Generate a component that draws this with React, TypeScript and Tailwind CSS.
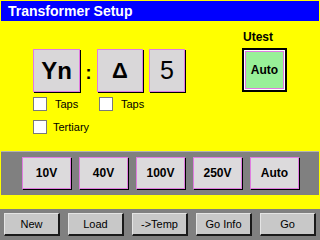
import React from 'react';

const FONT = { fontFamily: '"Liberation Sans", Arial, sans-serif' };

function BigKey({ label, width, className }: { label: string; width: string; className: string }) {
    return (
        <div
            className={`${width} h-[43px] flex items-center justify-center bg-[#d9d7d9] border border-[#e07ce0] shadow-[1px_1px_0_#000] text-black ${className}`}
        >
            {label}
        </div>
    );
}

function Check({ label, gap }: { label: string; gap: string }) {
    return (
        <div className={`flex items-center ${gap}`}>
            <div className="w-[14px] h-[14px] bg-white border border-[#7a7a7a]"></div>
            <span className="text-[11px] leading-[14px] text-black">{label}</span>
        </div>
    );
}

const RANGES = ['10V', '40V', '100V', '250V', 'Auto'];
const ACTIONS = ['New', 'Load', '->Temp', 'Go Info', 'Go'];

export default function App() {
    return (
        <div className="w-[320px] h-[240px] bg-[#ffff00] flex flex-col overflow-hidden" style={FONT}>
            {/* Title */}
            <div className="mx-[1px] mt-[1px] h-[20px] bg-[#0000ff] text-white font-bold text-[14px] leading-[16px] pl-[7px] flex items-center">
                Transformer Setup
            </div>

            {/* Main area */}
            <div className="h-[130px] flex">
                <div className="ml-[33px] mt-[28px] w-[153px] flex flex-col">
                    <div className="flex items-start">
                        <BigKey label="Yn" width="w-[47px]" className="text-[24px] font-bold" />
                        <div className="w-[17px] h-[43px] flex items-end justify-center pb-[10px] text-[18px] leading-[18px] font-bold text-black">:</div>
                        <BigKey label="Δ" width="w-[46px]" className="text-[22px] font-bold" />
                        <BigKey label="5" width="w-[36px]" className="ml-[6px] text-[25px]" />
                    </div>
                    <div className="flex mt-[5px]">
                        <div className="w-[66px]">
                            <Check label="Taps" gap="gap-[8px]" />
                        </div>
                        <Check label="Taps" gap="gap-[8px]" />
                    </div>
                    <div className="mt-[9px]">
                        <Check label="Tertiary" gap="gap-[6px]" />
                    </div>
                </div>

                <div className="ml-[56px] pt-[9px] flex flex-col">
                    <div className="ml-[1px] text-[12px] leading-[14px] font-bold text-black">Utest</div>
                    <div className="mt-[4px] w-[45px] h-[44px] border-2 border-black bg-white p-[1px]">
                        <div className="w-full h-full bg-[#98f098] border border-[#e07ce0] flex items-center justify-center text-[12px] font-bold text-black">
                            Auto
                        </div>
                    </div>
                </div>
            </div>

            {/* Range bar */}
            <div className="mx-[1px] h-[44px] bg-[#808080] border-t border-[#b4b4b4] pl-[21px] pt-[5px] flex gap-[8px]">
                {RANGES.map((r) => (
                    <div
                        key={r}
                        className="w-[49px] h-[32px] bg-[#dcdadc] border border-[#e07ce0] shadow-[1px_1px_0_#000] flex items-center justify-center text-[12px] font-bold text-black"
                    >
                        {r}
                    </div>
                ))}
            </div>

            <div className="h-[14px]"></div>

            {/* Footer */}
            <div className="h-[31px] bg-[#808080] px-[4px] pt-[4px] flex gap-[8px]">
                {ACTIONS.map((a) => (
                    <div
                        key={a}
                        className="w-[56px] h-[23px] bg-[#c8c8c8] border-t border-l border-[#e4e4e4] border-r-2 border-b-2 border-r-[#1a1a1a] border-b-[#1a1a1a] flex items-center justify-center text-[11px] text-black"
                    >
                        {a}
                    </div>
                ))}
            </div>
        </div>
    );
}
